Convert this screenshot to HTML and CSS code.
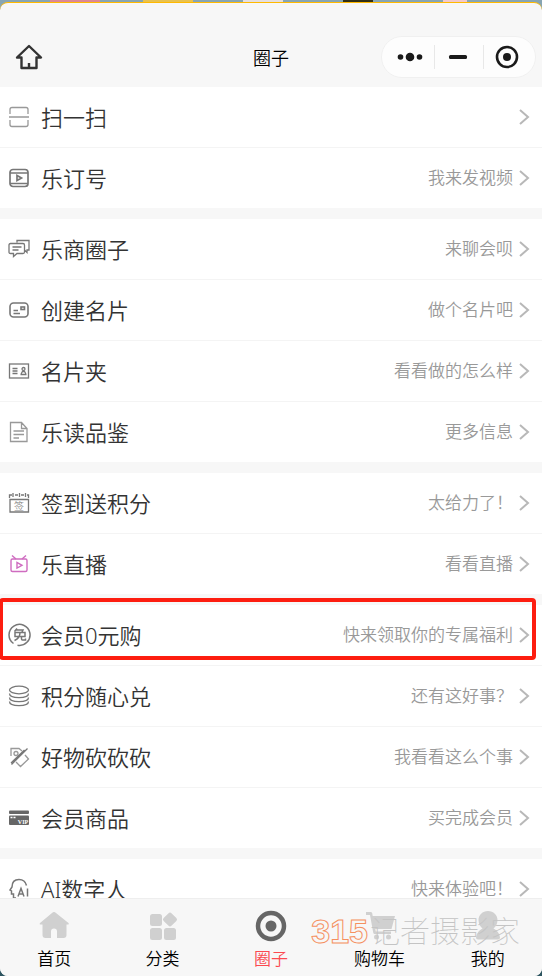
FILE: index.html
```html
<!DOCTYPE html>
<html lang="zh-CN">
<head>
<meta charset="UTF-8">
<meta name="viewport" content="width=device-width, initial-scale=1.0">
<title>圈子</title>
<link rel="stylesheet" href="styles.css">
</head>
<body>
<svg class="sprite" aria-hidden="true">
  <symbol id="arrow" viewBox="0 0 12 18"><path d="M2 2l8 7-8 7"/></symbol>
</svg>
<div class="desktop"><i class="thumb pink"></i><i class="thumb gold"></i><i class="thumb pale"></i><i class="thumb dark"></i><i class="thumb rose"></i></div>
<div class="app">
  <header class="navbar">
    <button class="home" aria-label="首页">
      <svg width="28" height="26" viewBox="0 0 28 26"><path d="M2 13.500L14 2l12 11.500h-4.500V24h-15V13.500z"/><path d="M14 24v-5"/></svg>
    </button>
    <h1>圈子</h1>
    <div class="capsule">
      <button aria-label="更多"><svg width="28" height="24" viewBox="0 0 28 24"><circle cx="4.500" cy="12" r="2.800"/><circle cx="14" cy="12" r="4.300"/><circle cx="23.500" cy="12" r="2.800"/></svg></button>
      <button aria-label="最小化"><svg width="24" height="24" viewBox="0 0 24 24"><rect x="3" y="10" width="18" height="4" rx="1.500"/></svg></button>
      <button aria-label="关闭"><svg width="24" height="24" viewBox="0 0 24 24"><circle cx="12" cy="12" r="10" fill="none" stroke="#1a1a1a" stroke-width="2.600"/><circle cx="12" cy="12" r="4"/></svg></button>
    </div>
  </header>

  <main class="list">
    <section class="group">
      <a class="row" href="#">
        <svg class="icon light" viewBox="0 0 22 22"><path d="M2 8V3.500Q2 1.500 4 1.500h14q2 0 2 2V8M2 14v4.500q0 2 2 2h14q2 0 2-2V14M1 11h20"/></svg>
        <span class="name">扫一扫</span><span class="hint"></span><svg class="arrow"><use href="#arrow"/></svg>
      </a>
      <a class="row" href="#">
        <svg class="icon" viewBox="0 0 22 22"><g stroke-width="1.700"><rect x="2" y="2.500" width="18" height="17" rx="3"/><path d="M2 6h18M2 16.500h18M9 8.500v5l4.500-2.500z"/></g></svg>
        <span class="name">乐订号</span><span class="hint">我来发视频</span><svg class="arrow"><use href="#arrow"/></svg>
      </a>
    </section>

    <section class="group">
      <a class="row" href="#">
        <svg class="icon" viewBox="0 0 22 22"><path d="M9 4.500V2.500h12v9.500h-2v2.500l-2.500-2.500M2.500 5.500h12.500q1.500 0 1.500 1.500v7q0 1.500-1.500 1.500H9l-3.500 3v-3h-3Q1 15.500 1 14V7q0-1.500 1.500-1.500zM4.500 9h9M4.500 12h6"/></svg>
        <span class="name">乐商圈子</span><span class="hint">来聊会呗</span><svg class="arrow"><use href="#arrow"/></svg>
      </a>
      <a class="row" href="#">
        <svg class="icon" viewBox="0 0 22 22"><g stroke-width="1.600"><rect x="2" y="4" width="18" height="14" rx="3.500"/><rect x="13" y="8" width="3.500" height="2.500"/><path d="M5.500 11.500h4.500M5.500 14.500h6.500"/></g></svg>
        <span class="name">创建名片</span><span class="hint">做个名片吧</span><svg class="arrow"><use href="#arrow"/></svg>
      </a>
      <a class="row" href="#">
        <svg class="icon" viewBox="0 0 22 22"><rect x="1.500" y="4" width="19" height="14"/><path d="M4.500 8.500h5M4.500 11h5M4.500 13.500h5M12.500 14.500h6M13 14l1.500-2.500h2L18 14"/><circle cx="15.500" cy="9" r="1.500"/></svg>
        <span class="name">名片夹</span><span class="hint">看看做的怎么样</span><svg class="arrow"><use href="#arrow"/></svg>
      </a>
      <a class="row" href="#">
        <svg class="icon light" viewBox="0 0 22 22"><path d="M2.500 1.500h11l5.500 6V20.500H2.500zM13.500 1.500v6H19M5.500 10h10.500M5.500 13.500h10.500M5.500 17h5.500"/></svg>
        <span class="name">乐读品鉴</span><span class="hint">更多信息</span><svg class="arrow"><use href="#arrow"/></svg>
      </a>
    </section>

    <section class="group">
      <a class="row" href="#">
        <svg class="icon" viewBox="0 0 22 22"><path d="M1.500 6V3H4M7 3h3M13 3h3M19 3h1.500v3M5 1v4M11.500 1v4M17.500 1v4M2 7.500h18.500v12.500H2z"/><text x="11" y="17.500" font-size="10" text-anchor="middle">签</text></svg>
        <span class="name">签到送积分</span><span class="hint">太给力了！</span><svg class="arrow"><use href="#arrow"/></svg>
      </a>
      <a class="row" href="#">
        <svg class="icon live" viewBox="0 0 22 22"><rect x="3" y="6" width="16" height="12.500" rx="1.500"/><path d="M4 2.500L8 6M18 2.500L14 6M9 9.500v5.500l5-2.700z"/></svg>
        <span class="name">乐直播</span><span class="hint">看看直播</span><svg class="arrow"><use href="#arrow"/></svg>
      </a>
    </section>

    <section class="group">
      <a class="row marked" href="#">
        <svg class="icon large" viewBox="0 0 24 24"><g stroke-width="1.500"><path d="M5.500 20.500a10.500 10.500 0 1 1 4 1.700M3.500 19l-1-2"/><path d="M9 5.500L6.500 8.500M8.500 7h6.500l-1 2M7 9.500h10v4H7zM12 9.500Q12 15 6.500 17.500M13.500 13.500v2.500q0 1 1 1h3v-1.500"/></g></svg>
        <span class="name">会员0元购</span><span class="hint">快来领取你的专属福利</span><svg class="arrow"><use href="#arrow"/></svg>
      </a>
      <a class="row" href="#">
        <svg class="icon" viewBox="0 0 22 22"><ellipse cx="11" cy="5" rx="9.500" ry="3.800"/><path d="M1.500 8.500c0 5.500 19 5.500 19 0M1.500 12.500c0 5.500 19 5.500 19 0M1.500 16.500c0 5.500 19 5.500 19 0"/></svg>
        <span class="name">积分随心兑</span><span class="hint">还有这好事？</span><svg class="arrow"><use href="#arrow"/></svg>
      </a>
      <a class="row" href="#">
        <svg class="icon light" viewBox="0 0 22 22"><path d="M3 10V2.500h8l3 2.500M17 9l3.500 4-8 7.500L8 16"/><circle cx="8" cy="7.500" r="2"/><path d="M19.500 2.500L3.500 18.500M16.500 4L3 17" stroke="#777"/></svg>
        <span class="name">好物砍砍砍</span><span class="hint">我看看这么个事</span><svg class="arrow"><use href="#arrow"/></svg>
      </a>
      <a class="row" href="#">
        <svg class="icon solid" viewBox="0 0 22 22"><rect x="1" y="3.500" width="20" height="3.500" rx="1"/><rect x="1" y="8.500" width="20" height="9.500" rx="1"/><path d="M2.500 10.500h2M5.500 10.500h2" stroke="#fff"/><text x="15" y="17" font-size="6" font-weight="700" text-anchor="middle">VIP</text></svg>
        <span class="name">会员商品</span><span class="hint">买完成会员</span><svg class="arrow"><use href="#arrow"/></svg>
      </a>
    </section>

    <section class="group">
      <a class="row" href="#">
        <svg class="icon" viewBox="0 0 22 22"><g stroke-width="1.500"><path d="M8 20H5.500v-4H3.500v-3l-1.500-1 2-3C4 4 7 1.500 11 1.500q6 0 7.500 6"/><path d="M10 18.500l3-8 3 8M11 16h4M19.500 10.500v8"/></g></svg>
        <span class="name">AI数字人</span><span class="hint">快来体验吧！</span><svg class="arrow"><use href="#arrow"/></svg>
      </a>
    </section>
  </main>

  <nav class="tabbar">
    <a class="tab" href="#">
      <svg viewBox="0 0 32 32"><path d="M16 2Q17 2 18 3l12.500 10q1 1.500-.5 1.500h-1.500V25q0 3-3 3h-6.500v-6.500q0-3-3-3t-3 3V28H7.500q-3 0-3-3V14.500H3q-2 0-1-1.500L14 3q1-1 2-1z"/></svg>
      <span>首页</span>
    </a>
    <a class="tab" href="#">
      <svg viewBox="0 0 32 32"><rect x="3" y="4" width="12" height="12" rx="2.500"/><rect x="3" y="18" width="12" height="12" rx="2.500"/><rect x="17" y="18" width="12" height="12" rx="2.500"/><rect x="17.500" y="4" width="11" height="11" rx="2" transform="rotate(45 23 9.500)"/></svg>
      <span>分类</span>
    </a>
    <a class="tab active" href="#">
      <svg viewBox="0 0 32 32"><circle cx="16" cy="16" r="13" fill="none" stroke="#666" stroke-width="4.500"/><circle cx="16" cy="16" r="5.500"/></svg>
      <span>圈子</span>
    </a>
    <a class="tab" href="#">
      <svg viewBox="0 0 32 32"><path d="M3 2h5q1 0 1.300 1.500L9.700 6H32l-3.500 13H12.300l.5 2.500H28v2.500H11.500Q10.500 24 10.200 22.500L7 5H3z"/><circle cx="13.500" cy="27" r="2.500"/><circle cx="25.500" cy="27" r="2.500"/></svg>
      <span>购物车</span>
    </a>
    <a class="tab" href="#">
      <svg viewBox="0 0 32 32"><path d="M16 1c5.500 0 9.500 4 9.500 9 0 4-2 7-4 8.500 3.500 1.500 6 4.500 6.500 9q0 2-2 2H6q-2 0-2-2c.5-4.500 3-7.500 6.500-9-2-1.500-4-4.500-4-8.500 0-5 4-9 9.500-9z"/></svg>
      <span>我的</span>
    </a>
    <div class="watermark"><b>315</b><span>记者摄影家</span></div>
  </nav>
</div>
</body>
</html>
```
FILE: styles.css
```css
* {
  box-sizing: border-box;
}

body {
  margin: 0;
  height: 100vh;
  display: flex;
  flex-direction: column;
  background: linear-gradient(#87a5b3 50%, #2d5560 50%);
  font-family: "Noto Sans", "Noto Sans CJK SC", sans-serif;
  font-weight: 350;
  color: #333;
  overflow: hidden;
}

a {
  color: inherit;
  text-decoration: none;
}

button {
  border: 0;
  padding: 0;
  background: none;
}

svg {
  display: block;
  flex: none;
}

.sprite {
  display: none;
}

/* strip of the desktop behind the window */
.desktop {
  height: 2px;
  display: flex;
  padding-left: 50px;
}

.thumb {
  width: 50px;
  margin-right: 43px;
}

.pink { background: #dc8794; }
.gold { background: #e8c14f; margin-right: 50px; }
.pale { background: #e5dfdf; width: 40px; margin-right: 60px; }
.dark { background: #302f16; width: 30px; margin-right: 70px; }
.rose { background: #f2c9ca; width: 24px; }

.app {
  flex: 1;
  min-height: 0;
  display: flex;
  flex-direction: column;
  border-top: 1px solid #ffb900;
  border-radius: 8px;
  background: #f7f7f7;
  overflow: hidden;
}

/* top bar */
.navbar {
  height: 84px;
  flex: none;
  display: grid;
  grid-template-columns: 1fr auto 1fr;
  align-items: center;
  padding: 24px 6px 0;
}

.navbar h1 {
  margin: 0;
  font-size: 18px;
  font-weight: 350;
  color: #000;
}

.home {
  justify-self: start;
  margin-left: 9px;
}

.home path {
  fill: none;
  stroke: #333;
  stroke-width: 2.4;
  stroke-linejoin: round;
}

.capsule {
  justify-self: end;
  display: flex;
  width: 155px;
  height: 42px;
  padding: 0 4px;
  border: 1px solid #f0f0f0;
  border-radius: 21px;
  background: #fdfdfd;
}

.capsule button {
  flex: 1;
  display: flex;
  align-items: center;
  justify-content: center;
  fill: #1a1a1a;
}

.capsule button + button {
  background: linear-gradient(#e8e8e8, #e8e8e8) left center / 1px 24px no-repeat;
}

/* menu */
.list {
  flex: 1;
  min-height: 0;
  overflow-y: auto;
  scrollbar-width: none;
}

.group {
  margin-bottom: 11px;
  background: #fff;
}

.row {
  position: relative;
  height: 61px;
  display: flex;
  align-items: center;
  padding: 0 12px 0 8px;
  border-bottom: 1px solid #f4f4f4;
}

.row:last-child {
  height: 60px;
  border-bottom: 0;
}

.icon {
  width: 22px;
  height: 22px;
  margin-right: 11px;
  fill: none;
  stroke: #777;
  stroke-width: 1.3;
}

.icon.light { stroke: #999; }
.icon.live { stroke: #cf6cc0; stroke-width: 1.4; }

.icon.large {
  width: 24px;
  height: 24px;
  margin-right: 9px;
}

.icon text {
  fill: #888;
  stroke: none;
}

.icon.solid {
  fill: #666;
  stroke: none;
}

.icon.solid text {
  fill: #fff;
  font-family: "Liberation Serif", serif;
}

.name {
  font-size: 22px;
  line-height: 32px;
}

.hint {
  margin-left: auto;
  margin-right: 5px;
  font-size: 17px;
  line-height: 24px;
  color: #999;
}

.arrow {
  width: 12px;
  height: 18px;
  fill: none;
  stroke: #b8b8b8;
  stroke-width: 2;
}

.marked::after {
  content: "";
  position: absolute;
  top: -7px;
  right: 6px;
  bottom: 5px;
  left: -1px;
  border: 4px solid #fd1d10;
  border-radius: 4px;
}

/* bottom tabs */
.tabbar {
  position: relative;
  flex: none;
  height: 78px;
  display: flex;
  border-top: 1px solid #eee;
  background: #f7f7f7;
}

.tab {
  flex: 1;
  display: flex;
  flex-direction: column;
  align-items: center;
  padding-top: 11px;
  font-size: 17px;
  line-height: 24px;
  color: #000;
}

.tab svg {
  width: 32px;
  height: 32px;
  margin-bottom: 5px;
  fill: #d0d0d0;
}

.tab.active { color: #fb4a50; }
.tab.active svg { fill: #666; }

.watermark {
  position: absolute;
  top: 12px;
  right: 22px;
  display: flex;
  align-items: center;
  gap: 2px;
  line-height: 40px;
  pointer-events: none;
}

.watermark b {
  font-family: "Liberation Sans", sans-serif;
  font-size: 34px;
  color: #f7f7f7;
  -webkit-text-stroke: 1px #f5905f;
}

.watermark span {
  font-size: 30px;
  font-weight: 100;
  color: #c4c4c4;
}
```
